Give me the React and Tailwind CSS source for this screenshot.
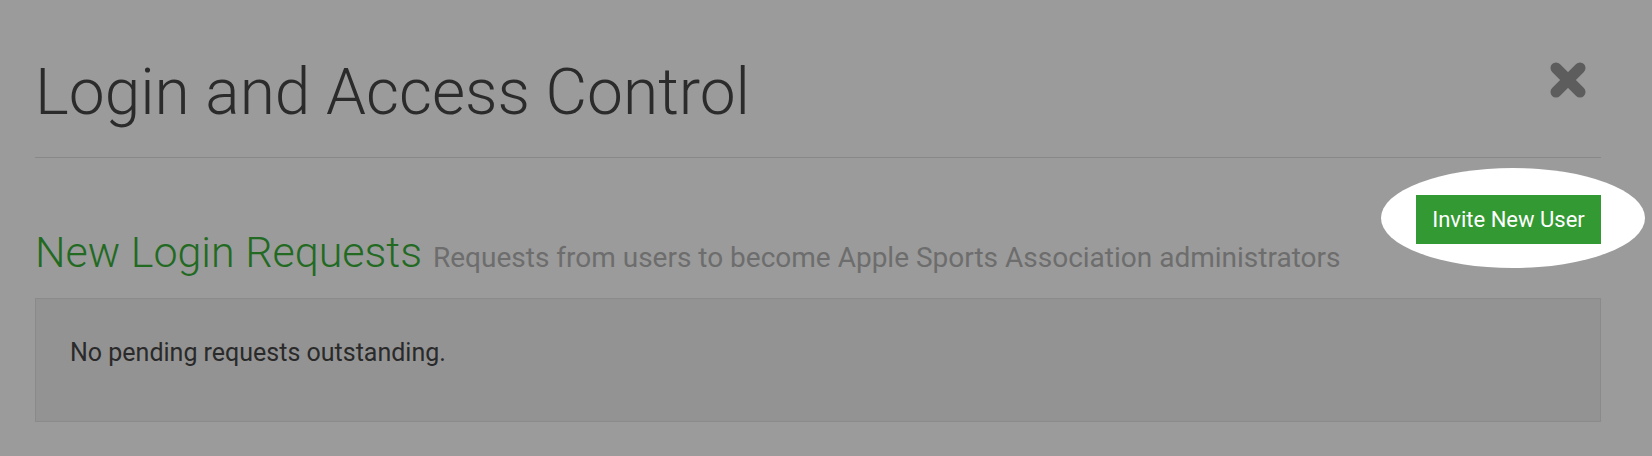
export default function App() {
  return (
    <div className="min-h-screen w-full bg-[#9b9b9b] pl-[35px] pr-[51px] pt-[58px] font-['Roboto',sans-serif]">
      {/* header */}
      <div className="flex items-start justify-between">
        <h1 className="text-[64px] font-light leading-[1.1] text-[#2b2b2b]">Login and Access Control</h1>
        <button className="mr-[13px] mt-[2px] text-[#5d5d5d]" aria-label="Close">
          <svg width="40" height="40" viewBox="0 0 40 40">
            <line x1="8" y1="8" x2="32" y2="32" stroke="currentColor" strokeWidth="11" strokeLinecap="round" />
            <line x1="32" y1="8" x2="8" y2="32" stroke="currentColor" strokeWidth="11" strokeLinecap="round" />
          </svg>
        </button>
      </div>
      <div className="mt-[29px] h-px bg-[#888888]" />

      {/* section */}
      <div className="mt-[37px] flex items-start justify-between">
        <h2 className="pt-[34px] text-[43px] leading-[1.1] whitespace-nowrap">
          <span className="font-light text-[#226a22]">New Login Requests</span>
          <span className="ml-[11px] text-[28px] text-[#6d6d6d]">Requests from users to become Apple Sports Association administrators</span>
        </h2>
        <div className="relative">
          <div className="absolute -left-[35px] -right-[44px] -top-[27px] -bottom-[24px] rounded-[50%] bg-white" />
          <button className="relative h-[49px] w-[185px] bg-[#339933] text-[22px] text-white">Invite New User</button>
        </div>
      </div>

      <div className="mt-[21px] border border-[#8a8a8a] bg-[#939393] pl-[34px] pt-[35px] pb-[50px]">
        <p className="text-[25px] leading-[1.5] text-[#2a2a2a]">No pending requests outstanding.</p>
      </div>
    </div>
  );
}
